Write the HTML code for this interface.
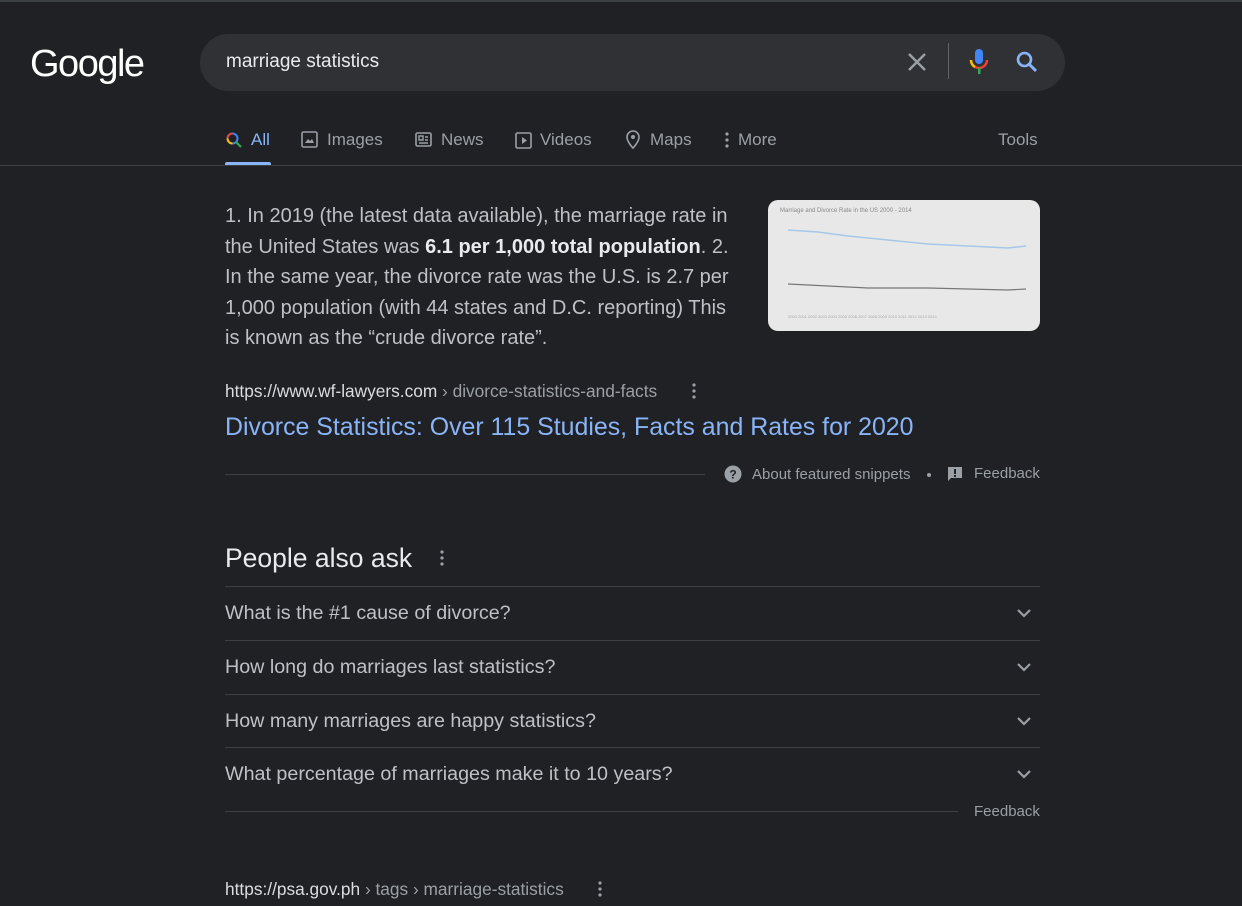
<!DOCTYPE html>
<html><head><meta charset="utf-8"><style>
*{margin:0;padding:0;box-sizing:border-box}
body{width:1242px;height:906px;background:#202124;font-family:"Liberation Sans",Arial,sans-serif;color:#bdc1c6;position:relative;overflow:hidden}
.a{position:absolute}
.logo{left:30px;top:43px;font-size:38px;color:#fff;letter-spacing:-1.5px;font-family:"Liberation Sans",sans-serif;}
.search{left:200px;top:34px;width:865px;height:57px;border-radius:29px;background:#303134}
.q{left:226px;top:51px;font-size:19px;color:#e8eaed}
.tabs span{position:absolute;top:130px;font-size:17px;color:#9aa0a6}
.hr{left:0;top:165px;width:1242px;height:1px;background:#3c4043}
.snip{left:225px;top:201px;width:530px;font-size:20px;line-height:30.6px;color:#bdc1c6;white-space:nowrap}
.snip b{color:#e8eaed}
.img{left:768px;top:200px;width:272px;height:131px;border-radius:10px;background:#e8e8e8}
.url{font-size:17.3px;color:#dadce0}
.url span{color:#9aa0a6}
.title{left:225px;top:413px;font-size:24.9px;color:#8ab4f8}
.sm{font-size:15px;color:#9aa0a6}
.paa{left:225px;top:543px;font-size:26.5px;color:#e8eaed}
.row{left:225px;width:815px;height:54px;border-top:1px solid #3c4043;font-size:19.7px;color:#bdc1c6;padding-top:15px}
.chev{position:absolute;right:8px;top:21px}
</style></head><body>
<div class="a" style="left:0;top:0;width:1242px;height:2px;background:#3c4043"></div>
<div class="a logo">Google</div>
<div class="a search"></div>
<div class="a q">marriage statistics</div>
<svg class="a" style="left:906px;top:51px" width="22" height="22" viewBox="0 0 22 22"><path d="M3 3L19 19M19 3L3 19" stroke="#9aa0a6" stroke-width="2.4"/></svg>
<div class="a" style="left:948px;top:43px;width:1px;height:36px;background:#5f6368"></div>
<svg class="a" style="left:968px;top:48px" width="22" height="28" viewBox="0 0 22 28"><rect x="7" y="1" width="8" height="15" rx="4" fill="#4285f4"/><path d="M3 12a8 8 0 0 0 16 0" stroke="#ea4335" stroke-width="2.5" fill="none"/><path d="M3 12a8 8 0 0 0 4 7" stroke="#fbbc05" stroke-width="2.5" fill="none"/><rect x="10" y="20" width="2.5" height="6" fill="#34a853"/></svg>
<svg class="a" style="left:1015px;top:50px" width="24" height="24" viewBox="0 0 24 24"><circle cx="9.5" cy="9.5" r="6.5" stroke="#8ab4f8" stroke-width="2.6" fill="none"/><path d="M14 14L21 21" stroke="#8ab4f8" stroke-width="3"/></svg>
<div class="tabs">
<svg class="a" style="left:225px;top:131px" width="18" height="18" viewBox="0 0 18 18"><circle cx="7.5" cy="7.5" r="5" stroke="#4285f4" stroke-width="2" fill="none"/><path d="M2.5 7.5a5 5 0 0 1 5-5" stroke="#ea4335" stroke-width="2" fill="none"/><path d="M2.5 7.5a5 5 0 0 0 5 5" stroke="#fbbc05" stroke-width="2" fill="none"/><path d="M11 11L16 16" stroke="#34a853" stroke-width="2.2"/></svg>
<span style="left:251px;color:#8ab4f8">All</span>
<div class="a" style="left:225px;top:162px;width:46px;height:3px;background:#8ab4f8;border-radius:2px 2px 0 0"></div>
<svg class="a" style="left:301px;top:131px" width="17" height="17" viewBox="0 0 17 17"><rect x="1" y="1" width="15" height="15" rx="1.5" stroke="#9aa0a6" stroke-width="1.6" fill="none"/><path d="M4 12l3-4 2 2 2-2 2 4z" fill="#9aa0a6"/></svg>
<span style="left:327px">Images</span>
<svg class="a" style="left:415px;top:132px" width="17" height="15" viewBox="0 0 17 15"><rect x="1" y="1" width="15" height="13" rx="1.5" stroke="#9aa0a6" stroke-width="1.6" fill="none"/><path d="M4 4h4v4H4zM10 5h3M10 8h3M4 11h9" stroke="#9aa0a6" stroke-width="1.4" fill="none"/></svg>
<span style="left:441px">News</span>
<svg class="a" style="left:515px;top:132px" width="17" height="17" viewBox="0 0 17 17"><rect x="1" y="1" width="15" height="15" rx="1.5" stroke="#9aa0a6" stroke-width="1.6" fill="none"/><path d="M7 5v7l5-3.5z" fill="#9aa0a6"/></svg>
<span style="left:540px">Videos</span>
<svg class="a" style="left:625px;top:130px" width="16" height="20" viewBox="0 0 16 20"><path d="M8 18s-6-6-6-11a6 6 0 0 1 12 0c0 5-6 11-6 11z" stroke="#9aa0a6" stroke-width="1.6" fill="none"/><circle cx="8" cy="7" r="2" fill="#9aa0a6"/></svg>
<span style="left:650px">Maps</span>
<svg class="a" style="left:724px;top:131px" width="6" height="18" viewBox="0 0 6 18"><circle cx="3" cy="3" r="1.6" fill="#9aa0a6"/><circle cx="3" cy="9" r="1.6" fill="#9aa0a6"/><circle cx="3" cy="15" r="1.6" fill="#9aa0a6"/></svg>
<span style="left:738px">More</span>
<span style="left:998px">Tools</span>
</div>
<div class="a hr"></div>
<div class="a snip">1. In 2019 (the latest data available), the marriage rate in<br>the United States was <b>6.1 per 1,000 total population</b>. 2.<br>In the same year, the divorce rate was the U.S. is 2.7 per<br>1,000 population (with 44 states and D.C. reporting) This<br>is known as the “crude divorce rate”.</div>
<div class="a img"><svg width="272" height="131" viewBox="0 0 272 131"><text x="12" y="12" font-size="6" fill="#888" font-family="Liberation Sans">Marriage and Divorce Rate in the US 2000 - 2014</text><path d="M20 30L50 32 80 36 120 40 160 44 200 46 240 48 258 46" stroke="#a7c7e7" stroke-width="1.5" fill="none"/><path d="M20 84L60 86 100 88 160 88 200 89 240 90 258 89" stroke="#777" stroke-width="1.2" fill="none"/><text x="20" y="118" font-size="4" fill="#aaa">2000 2001 2002 2003 2004 2005 2006 2007 2008 2009 2010 2011 2012 2013 2014</text></svg></div>
<div class="a url" style="left:225px;top:381px">https://www.wf-lawyers.com <span>› divorce-statistics-and-facts</span></div>
<svg class="a" style="left:691px;top:382px" width="6" height="18" viewBox="0 0 6 18"><circle cx="3" cy="3" r="1.6" fill="#9aa0a6"/><circle cx="3" cy="9" r="1.6" fill="#9aa0a6"/><circle cx="3" cy="15" r="1.6" fill="#9aa0a6"/></svg>
<div class="a title">Divorce Statistics: Over 115 Studies, Facts and Rates for 2020</div>
<div class="a" style="left:225px;top:474px;width:480px;height:1px;background:#3c4043"></div>
<svg class="a" style="left:724px;top:465px" width="18" height="18" viewBox="0 0 18 18"><circle cx="9" cy="9" r="8.5" fill="#9aa0a6"/><text x="9" y="13.5" text-anchor="middle" font-size="12" font-weight="bold" fill="#202124" font-family="Liberation Sans">?</text></svg>
<div class="a sm" style="left:752px;top:466px">About featured snippets</div>
<div class="a" style="left:927px;top:473px;width:4px;height:4px;border-radius:2px;background:#9aa0a6"></div>
<svg class="a" style="left:947px;top:466px" width="16" height="16" viewBox="0 0 16 16"><path d="M1 1h14v11H4l-3 3z" fill="#9aa0a6"/><rect x="7" y="3" width="2" height="5" fill="#202124"/><rect x="7" y="9" width="2" height="2" fill="#202124"/></svg>
<div class="a sm" style="left:974px;top:465px">Feedback</div>
<div class="a paa">People also ask</div>
<svg class="a" style="left:439px;top:549px" width="6" height="18" viewBox="0 0 6 18"><circle cx="3" cy="3" r="1.6" fill="#9aa0a6"/><circle cx="3" cy="9" r="1.6" fill="#9aa0a6"/><circle cx="3" cy="15" r="1.6" fill="#9aa0a6"/></svg>
<div class="a row" style="top:586px">What is the #1 cause of divorce?<svg class="chev" width="16" height="10" viewBox="0 0 16 10"><path d="M2 2l6 6 6-6" stroke="#9aa0a6" stroke-width="2.2" fill="none"/></svg></div>
<div class="a row" style="top:640px">How long do marriages last statistics?<svg class="chev" width="16" height="10" viewBox="0 0 16 10"><path d="M2 2l6 6 6-6" stroke="#9aa0a6" stroke-width="2.2" fill="none"/></svg></div>
<div class="a row" style="top:694px">How many marriages are happy statistics?<svg class="chev" width="16" height="10" viewBox="0 0 16 10"><path d="M2 2l6 6 6-6" stroke="#9aa0a6" stroke-width="2.2" fill="none"/></svg></div>
<div class="a row" style="top:747px">What percentage of marriages make it to 10 years?<svg class="chev" width="16" height="10" viewBox="0 0 16 10"><path d="M2 2l6 6 6-6" stroke="#9aa0a6" stroke-width="2.2" fill="none"/></svg></div>
<div class="a" style="left:225px;top:811px;width:733px;height:1px;background:#3c4043"></div>
<div class="a sm" style="left:974px;top:803px">Feedback</div>
<div class="a url" style="left:225px;top:879px">https://psa.gov.ph <span>› tags › marriage-statistics</span></div>
<svg class="a" style="left:597px;top:880px" width="6" height="18" viewBox="0 0 6 18"><circle cx="3" cy="3" r="1.6" fill="#9aa0a6"/><circle cx="3" cy="9" r="1.6" fill="#9aa0a6"/><circle cx="3" cy="15" r="1.6" fill="#9aa0a6"/></svg>
</body></html>
